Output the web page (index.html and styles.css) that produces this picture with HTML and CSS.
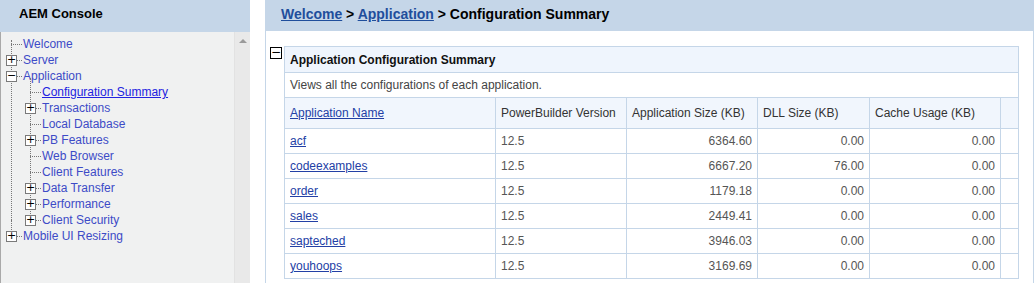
FILE: index.html
```html
<!DOCTYPE html>
<html lang="en">

<head>
  <meta charset="UTF-8">
  <title>AEM Console</title>
  <link rel="stylesheet" href="styles.css">
</head>

<body>
  <!-- left navigation -->
  <div class="side">
    <div class="side-head">AEM Console</div>
    <div class="side-body">
      <ul class="tree">
        <li class="leaf"><a href="#">Welcome</a></li>
        <li><span class="tog">+</span><a href="#">Server</a></li>
        <li class="open"><span class="tog">&minus;</span><a href="#">Application</a>
          <ul>
            <li class="leaf"><a href="#" class="cur">Configuration Summary</a></li>
            <li><span class="tog">+</span><a href="#">Transactions</a></li>
            <li class="leaf"><a href="#">Local Database</a></li>
            <li><span class="tog">+</span><a href="#">PB Features</a></li>
            <li class="leaf"><a href="#">Web Browser</a></li>
            <li class="leaf"><a href="#">Client Features</a></li>
            <li><span class="tog">+</span><a href="#">Data Transfer</a></li>
            <li><span class="tog">+</span><a href="#">Performance</a></li>
            <li class="last"><span class="tog">+</span><a href="#">Client Security</a></li>
          </ul>
        </li>
        <li class="last"><span class="tog">+</span><a href="#">Mobile UI Resizing</a></li>
      </ul>
      <div class="scroll"><span class="arrow"></span></div>
    </div>
  </div>

  <!-- main content -->
  <div class="main">
    <div class="crumb">
      <a href="#">Welcome</a> &gt; <a href="#">Application</a> &gt; Configuration Summary
    </div>
    <div class="content">
      <span class="box-tog">&minus;</span>
      <table class="summary">
        <tr class="title">
          <td colspan="6">Application Configuration Summary</td>
        </tr>
        <tr class="desc">
          <td colspan="6">Views all the configurations of each application.</td>
        </tr>
        <tr class="head">
          <td class="c1"><a href="#">Application Name</a></td>
          <td class="c2">PowerBuilder Version</td>
          <td class="c3">Application Size (KB)</td>
          <td class="c4">DLL Size (KB)</td>
          <td class="c5">Cache Usage (KB)</td>
          <td class="c6"></td>
        </tr>
        <tr>
          <td><a href="#">acf</a></td><td>12.5</td><td class="num">6364.60</td><td class="num">0.00</td><td class="num">0.00</td><td></td>
        </tr>
        <tr>
          <td><a href="#">codeexamples</a></td><td>12.5</td><td class="num">6667.20</td><td class="num">76.00</td><td class="num">0.00</td><td></td>
        </tr>
        <tr>
          <td><a href="#">order</a></td><td>12.5</td><td class="num">1179.18</td><td class="num">0.00</td><td class="num">0.00</td><td></td>
        </tr>
        <tr>
          <td><a href="#">sales</a></td><td>12.5</td><td class="num">2449.41</td><td class="num">0.00</td><td class="num">0.00</td><td></td>
        </tr>
        <tr>
          <td><a href="#">sapteched</a></td><td>12.5</td><td class="num">3946.03</td><td class="num">0.00</td><td class="num">0.00</td><td></td>
        </tr>
        <tr>
          <td><a href="#">youhoops</a></td><td>12.5</td><td class="num">3169.69</td><td class="num">0.00</td><td class="num">0.00</td><td></td>
        </tr>
      </table>
    </div>
  </div>
</body>

</html>
```

FILE: styles.css
```css
html,
body {
  height: 100%;
}

body {
  margin: 0;
  display: flex;
  font-family: "Liberation Sans", Arial, sans-serif;
  font-size: 12px;
  background: #fff;
  overflow: hidden;
}

/* left navigation */
.side {
  width: 250px;
  display: flex;
  flex-direction: column;
  flex-shrink: 0;
}

.side-head {
  height: 32px;
  box-sizing: border-box;
  background-color: #c5d6e8;
  padding: 6px 0 0 19px;
  font-size: 13px;
  font-weight: bold;
  color: #000;
}

.side-body {
  flex: 1;
  display: flex;
  background-color: #f0f1f1;
  border-left: 1px solid #a9a9a9;
}

.tree {
  flex: 1;
  list-style: none;
  margin: 0;
  padding: 4px 0 0 5px;
}

.tree ul {
  list-style: none;
  margin: 0;
  padding: 0 0 0 2px;
}

.tree li {
  position: relative;
  line-height: 16px;
  padding-left: 17px;
}

/* dotted connectors */
.tree li::before {
  content: "";
  position: absolute;
  left: 5px;
  top: 8px;
  width: 11px;
  border-top: 1px dotted #777;
}

.tree li::after {
  content: "";
  position: absolute;
  left: 5px;
  top: -8px;
  bottom: 0;
  border-left: 1px dotted #777;
}

.tree li.last::after {
  bottom: auto;
  height: 16px;
}

.tree > li:first-child::after {
  top: 4px;
}

.tree li li:first-child::after {
  top: -6px;
}

.tog {
  position: absolute;
  left: 0;
  top: 3px;
  width: 9px;
  height: 9px;
  border: 1px solid #7a7a7a;
  background: #fff;
  font-size: 11px;
  line-height: 8px;
  text-align: center;
  color: #000;
  z-index: 1;
  font-family: "DejaVu Sans", sans-serif;
}

.tree a {
  color: #3d4bc7;
  text-decoration: none;
}

.tree a.cur {
  color: #2222e0;
  text-decoration: underline;
}

.scroll {
  width: 15px;
  background-color: #e9e9e9;
  border-left: 1px solid #e2e2e2;
  position: relative;
}

.arrow {
  position: absolute;
  left: 4px;
  top: 7px;
  width: 0;
  height: 0;
  border-left: 4px solid transparent;
  border-right: 4px solid transparent;
  border-bottom: 4px solid #9a9a9a;
}

/* main area */
.main {
  flex: 1;
  margin-left: 15px;
  margin-right: 2px;
  border-left: 1px solid #c5d6e8;
  border-right: 1px solid #c5d6e8;
}

.crumb {
  height: 31px;
  box-sizing: border-box;
  background-color: #c5d6e8;
  padding: 6px 0 0 15px;
  font-size: 14px;
  font-weight: bold;
  color: #000;
}

.crumb a {
  color: #1f4e9c;
}

.content {
  display: flex;
  align-items: flex-start;
  padding: 15px 0 0 4px;
}

.box-tog {
  width: 10px;
  height: 10px;
  border: 1px solid #000;
  font-size: 12px;
  line-height: 9px;
  text-align: center;
  margin: 1px 2px 0 0;
  font-family: "DejaVu Sans", sans-serif;
}

.summary {
  border-collapse: collapse;
  border: 1px solid #c0d3e8;
  width: 735px;
  color: #555;
}

.summary td {
  border: 1px solid #c5d6e8;
  padding: 0 5px;
  height: 24px;
}

.summary .title td {
  background-color: #eff5fd;
  font-weight: bold;
  color: #111;
  height: 25px;
}

.summary .desc td {
  color: #444;
}

.summary .head td {
  background-color: #f1f6fd;
  color: #333;
  height: 30px;
}

.summary a {
  color: #2340a5;
}

.summary .num {
  text-align: right;
}

.c1 { width: 200px; }
.c2 { width: 120px; }
.c3 { width: 120px; }
.c4 { width: 101px; }
.c5 { width: 120px; }
.c6 { width: 7px; }
```
